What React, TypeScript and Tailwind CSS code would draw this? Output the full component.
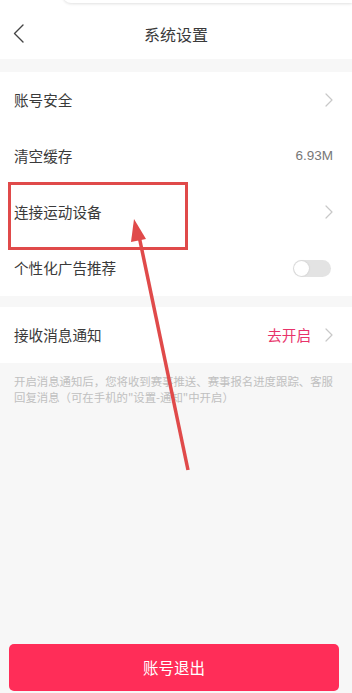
import React from 'react'

const font = { fontFamily: '"Noto Sans CJK SC", "Noto Sans", sans-serif' }

function Chevron() {
  return (
    <svg width="8" height="14" viewBox="0 0 8 14" className="shrink-0">
      <path d="M1 1l6 6-6 6" fill="none" stroke="#c8c8c8" strokeWidth="1.2" strokeLinecap="round" strokeLinejoin="round" />
    </svg>
  )
}

function Row({ label, right }: { label: string; right?: React.ReactNode }) {
  return (
    <div className="h-14 flex items-center justify-between pl-[14px] pr-[19px]">
      <span className="text-[14.6px] text-[#3a3a3a]">{label}</span>
      <div className="flex items-center gap-[14px]">{right}</div>
    </div>
  )
}

export default function App() {
  return (
    <div className="relative w-[352px] h-[693px] overflow-hidden bg-[#f7f7f7]" style={font}>
      {/* top popup edge */}
      <div className="absolute left-[63px] right-0 -top-[10px] h-[13px] bg-white rounded-bl-[8px] shadow-[0_1px_3px_rgba(0,0,0,0.12)] z-10" />

      {/* header */}
      <div className="h-[59px] bg-white relative flex items-center justify-center pt-[8px]">
        <svg width="12" height="20" viewBox="0 0 12 20" className="absolute left-[13px] top-[24px]">
          <path d="M10 1L1.5 9.5 10 18" fill="none" stroke="#444" strokeWidth="1.4" strokeLinecap="round" strokeLinejoin="round" />
        </svg>
        <span className="text-[16px] text-[#3a3a3a]">系统设置</span>
      </div>

      <div className="h-[13px]" />

      <div className="bg-white">
        <Row label="账号安全" right={<Chevron />} />
        <Row label="清空缓存" right={<span className="text-[13.5px] text-[#777]" style={{ fontFamily: '"Liberation Sans", sans-serif' }}>6.93M</span>} />
        <Row label="连接运动设备" right={<Chevron />} />
        <div className="h-14 flex items-center justify-between pl-[14px] pr-[21px]">
          <span className="text-[14.6px] text-[#3a3a3a]">个性化广告推荐</span>
          <div className="w-[38px] h-[17px] rounded-full bg-[#e3e3e3] relative">
            <div className="absolute left-[1px] top-[1px] w-[15px] h-[15px] rounded-full bg-white shadow-[0_0_2px_rgba(0,0,0,0.15)]" />
          </div>
        </div>
      </div>

      <div className="h-[11px]" />

      <div className="bg-white">
        <Row label="接收消息通知" right={<><span className="text-[14.6px] text-[#e8336a]">去开启</span><Chevron /></>} />
      </div>

      <p className="pl-[14px] pr-[16px] pt-[10px] text-[11.4px] leading-[16px] text-[#c0c0c0]">
        开启消息通知后，您将收到赛事推送、赛事报名进度跟踪、客服回复消息（可在手机的"设置-通知"中开启）
      </p>

      <div className="absolute left-[9px] right-[13px] top-[644px] h-[47px] rounded-[5px] bg-[#ff2d58] flex items-center justify-center">
        <span className="text-[15.5px] text-white">账号退出</span>
      </div>

      {/* annotation */}
      <div className="absolute left-[8px] top-[182px] w-[180px] h-[68px] border-[3px] border-[#e04a4a] pointer-events-none" />
      <svg className="absolute left-0 top-0 pointer-events-none" width="352" height="693">
        <line x1="188" y1="470" x2="139" y2="236" stroke="#e04a4a" strokeWidth="3.5" />
        <polygon points="134,219 131,242 146,239" fill="#e04a4a" />
      </svg>
    </div>
  )
}
